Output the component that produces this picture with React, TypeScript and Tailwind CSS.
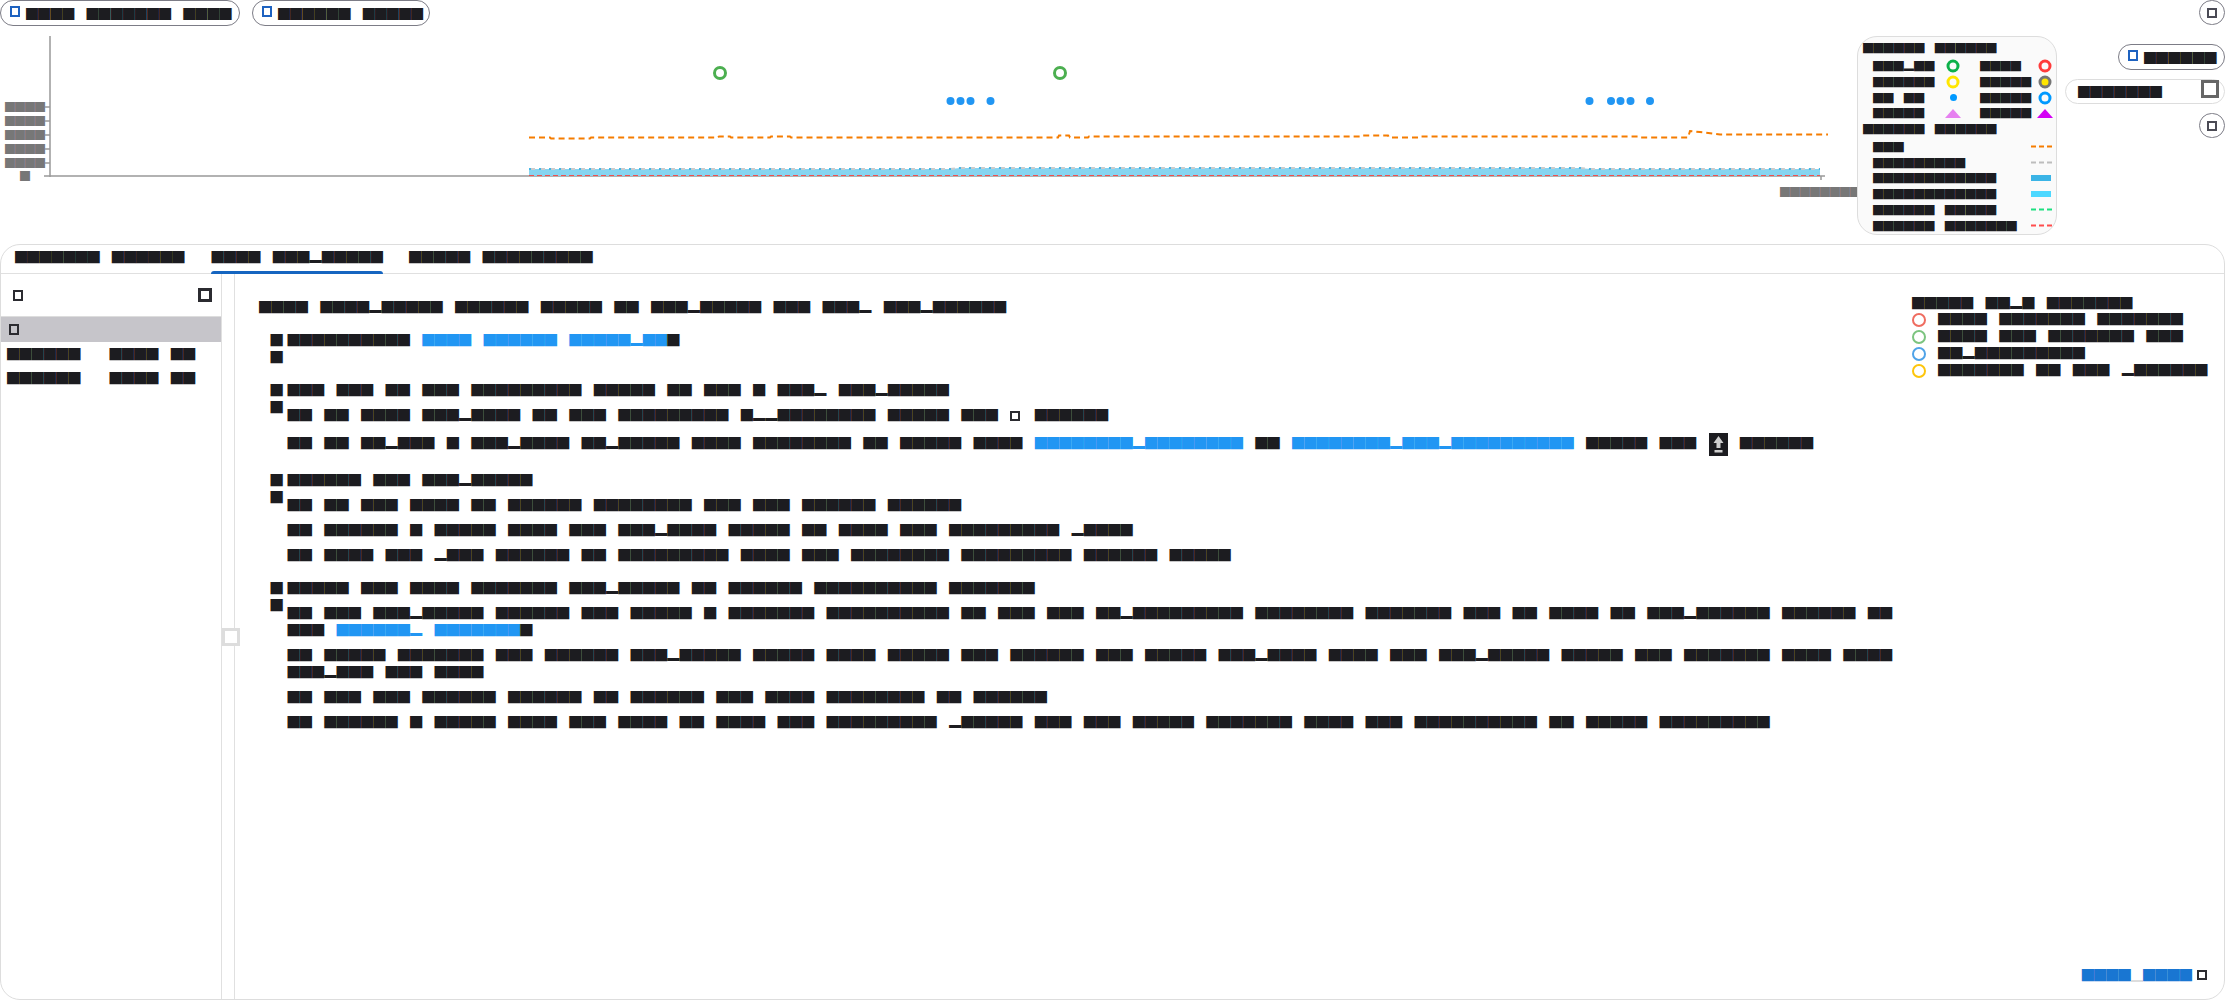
import React from "react";

const Box = ({ className = "" }: { className?: string }) => (
  <span className={`inline-block shrink-0 ${className}`} />
);

function Pill({ text, className = "" }: { text: string; className?: string }) {
  return (
    <div className={`flex h-[26px] items-center gap-[6px] rounded-full border border-[#7c7c86] pl-[9px] ${className}`}>
      <Box className="h-[11px] w-[10px] -translate-y-[2px] border-2 border-[#1e62c0]" />
      <span className="text-[12.1px]">{text}</span>
    </div>
  );
}

function RoundButton() {
  return (
    <button className="flex h-[25px] w-[26px] items-center justify-center rounded-full border border-[#7c7c86]">
      <Box className="h-[10px] w-[10px] border-2 border-[#4b4b55]" />
    </button>
  );
}

function Chart() {
  return (
    <svg width="1857" height="208" className="shrink-0" style={{ fontFamily: '"Noto Sans CJK SC", sans-serif' }}>
      <g fill="#777777" fontSize="10">
        <text x="5" y="75">████</text>
        <text x="5" y="89">████</text>
        <text x="5" y="103">████</text>
        <text x="5" y="117">████</text>
        <text x="5" y="131">████</text>
        <text x="20" y="144">█</text>
        <text x="1780" y="160">████████</text>
      </g>
      <g stroke="#999999" strokeWidth="1.5">
        <line x1="50" y1="0" x2="50" y2="141" />
        <line x1="44" y1="140" x2="1825" y2="140" />
        <line x1="45" y1="71" x2="50" y2="71" />
        <line x1="45" y1="85" x2="50" y2="85" />
        <line x1="45" y1="99" x2="50" y2="99" />
        <line x1="45" y1="113" x2="50" y2="113" />
        <line x1="45" y1="127" x2="50" y2="127" />
        <line x1="1821" y1="140" x2="1821" y2="144" />
      </g>
      <polygon points="529,133 950,133 960,132 1000,132 1010,132 1580,132 1590,133 1820,133 1820,140 529,140" fill="#87d4f0" />
      <polyline points="529,133 950,133 960,132 1000,132 1010,132 1580,132 1590,133 1820,133" fill="none" stroke="#cccccc" strokeWidth="2" strokeDasharray="6 4" />
      <polyline points="529,133 950,133 960,132 1000,132 1010,132 1580,132 1590,133 1820,133" fill="none" stroke="#45b6e6" strokeWidth="2" strokeDasharray="2 8" />
      <line x1="529" y1="139.5" x2="1820" y2="139.5" stroke="#f05050" strokeWidth="1" strokeDasharray="5 3" />
      <polyline
        points="529,101.5 550,101.5 551,102.5 590,102.5 591,101.5 718,101.5 719,100.5 730,100.5 731,101.5 770,101.5 771,100.5 790,100.5 791,101.5 1058,101.5 1059,99.5 1069,99.5 1070,101.5 1088,101.5 1089,100.5 1360,100.5 1361,99.5 1388,99.5 1389,101.5 1420,101.5 1421,100.5 1610,100.5 1640,100.5 1641,101.5 1688,101.5 1690,95 1700,96 1720,98.5 1828,98.5"
        fill="none"
        stroke="#f57c00"
        strokeWidth="2"
        strokeDasharray="6 4"
      />
      <g fill="none" stroke="#4caf50" strokeWidth="3">
        <circle cx="720" cy="37" r="5.5" />
        <circle cx="1060" cy="37" r="5.5" />
      </g>
      <g fill="#2196f3">
        <circle cx="950.5" cy="65" r="4" />
        <circle cx="960.5" cy="65" r="4" />
        <circle cx="970.5" cy="65" r="4" />
        <circle cx="990.5" cy="65" r="4" />
        <circle cx="1589.5" cy="65" r="4" />
        <circle cx="1611" cy="65" r="4" />
        <circle cx="1620.5" cy="65" r="4" />
        <circle cx="1630.5" cy="65" r="4" />
        <circle cx="1650" cy="65" r="4" />
      </g>
    </svg>
  );
}

function Ring({ color, fill = "none" }: { color: string; fill?: string }) {
  return (
    <svg width="14" height="14" viewBox="0 0 14 14" className="shrink-0">
      <circle cx="7" cy="7" r="5" fill={fill} stroke={color} strokeWidth="3" />
    </svg>
  );
}

function Triangle({ color }: { color: string }) {
  return (
    <svg width="16" height="9" viewBox="0 0 16 9" className="shrink-0">
      <polygon points="8,0 16,9 0,9" fill={color} />
    </svg>
  );
}

function Dash({ color }: { color: string }) {
  return (
    <svg width="21" height="3" viewBox="0 0 21 3">
      <line x1="0" y1="1.5" x2="21" y2="1.5" stroke={color} strokeWidth="2" strokeDasharray="5 3" />
    </svg>
  );
}

function MarkerRow({ a, sa, b, sb }: { a: string; sa: React.ReactNode; b: string; sb: React.ReactNode }) {
  return (
    <div className="grid h-[15.75px] grid-cols-[67px_26px_66px_26px] items-center pl-[10px]">
      <span>{a}</span>
      <span className="flex justify-center">{sa}</span>
      <span className="ml-[14px] whitespace-nowrap">{b}</span>
      <span className="flex justify-center">{sb}</span>
    </div>
  );
}

function LineRow({ label, swatch }: { label: string; swatch: React.ReactNode }) {
  return (
    <div className="flex h-[15.75px] items-center justify-between pl-[10px] pr-[4px]">
      <span>{label}</span>
      <span className="flex w-[21px] items-center">{swatch}</span>
    </div>
  );
}

function Legend() {
  return (
    <div className="h-[199px] w-[200px] shrink-0 rounded-[20px] border border-[#dddddd] bg-[#fafafa] pl-[5px] pt-[3px] text-[10.27px] leading-[16px]">
      <div className="h-4">██████　██████</div>
      <div className="mt-[2px]">
        <MarkerRow a="███▂██" sa={<Ring color="#0cb04a" />} b="████" sb={<Ring color="#ff3b3b" />} />
        <MarkerRow a="██████" sa={<Ring color="#ffe600" />} b="█████" sb={<Ring color="#757575" fill="#ffe600" />} />
        <MarkerRow
          a="██　██"
          sa={<span className="h-[7px] w-[7px] rounded-full bg-[#0099ff]" />}
          b="█████"
          sb={<Ring color="#0099ff" />}
        />
        <MarkerRow a="█████" sa={<Triangle color="#e680f0" />} b="█████" sb={<Triangle color="#d400f5" />} />
      </div>
      <div className="h-4">██████　██████</div>
      <div className="mt-[2px]">
        <LineRow label="███" swatch={<Dash color="#f57c00" />} />
        <LineRow label="█████████" swatch={<Dash color="#bdbdbd" />} />
        <LineRow label="████████████" swatch={<span className="h-[6px] w-5 bg-[#3bb4e6]" />} />
        <LineRow label="████████████" swatch={<span className="h-[6px] w-5 bg-[#4dd8ff]" />} />
        <LineRow label="██████　█████" swatch={<Dash color="#1de080" />} />
        <LineRow label="██████　███████" swatch={<Dash color="#ff4d4d" />} />
      </div>
    </div>
  );
}

function Link({ children }: { children: React.ReactNode }) {
  return <span className="text-[#2196f3]">{children}</span>;
}

const Tofu = () => (
  <span className="inline-block w-[12.25px] align-middle">
    <Box className="block h-[10px] w-[10px] border-2 border-[#2b2b30]" />
  </span>
);

function KeyIcon() {
  return (
    <span className="inline-flex h-[23px] w-[19px] items-center justify-center bg-[#1c1c20] align-middle">
      <svg width="11" height="17" viewBox="0 0 11 17" fill="#cfcfcf">
        <polygon points="5.5,0 10.5,7 7.5,7 7.5,12 3.5,12 3.5,7 0.5,7" />
        <rect x="1.5" y="14" width="8" height="2.5" />
      </svg>
    </span>
  );
}

function Item({ head, subs }: { head: React.ReactNode; subs?: React.ReactNode[] }) {
  return (
    <div className="ml-[11.5px] flex gap-[4.75px]">
      <span className="h-[34px] w-[12.25px] shrink-0 break-all">██</span>
      <div className="min-w-0 flex-1">
        <div>{head}</div>
        {subs?.map((s, i) => (
          <div key={i} className="mt-2">
            {s}
          </div>
        ))}
      </div>
    </div>
  );
}

function Note() {
  const rows: [string, string][] = [
    ["#ef6c60", "████　███████　███████"],
    ["#7cc47f", "████　███　███████　███"],
    ["#4fa3e8", "██▂█████████"],
    ["#fdc50c", "███████　██　███　▂██████"],
  ];
  return (
    <div className="ml-[5px] -mt-[4px] shrink-0">
      <div className="h-4">█████　██▂█　███████</div>
      {rows.map(([c, t]) => (
        <div key={t} className="flex items-center gap-[12px]">
          <svg width="14" height="14" viewBox="0 0 14 14">
            <circle cx="7" cy="7" r="6" fill="none" stroke={c} strokeWidth="2" />
          </svg>
          <span className="whitespace-nowrap">{t}</span>
        </div>
      ))}
    </div>
  );
}

function Content() {
  return (
    <div className="flex min-w-0 flex-1 pl-[24px] pt-[25px]">
      <div className="w-[1648px] shrink-0 break-keep">
        <div className="mb-4">████　████▂█████　██████　█████　██　███▂█████　███　███▂　███▂██████</div>
        <div className="flex flex-col gap-4">
          <Item
            head={
              <>
                ██████████　<Link>████　██████　█████▂██</Link>█
              </>
            }
          />
          <Item
            head="███　███　██　███　█████████　█████　██　███　█　███▂　███▂█████"
            subs={[
              <>
                ██　██　████　███▂████　██　███　█████████　█▂▂████████　█████　███　<Tofu />　██████
              </>,
              <>
                {"██　██　██▂███　█　███▂████　██▂█████　████　████████　██　█████　████　"}
                <Link>████████▂████████</Link>　██　<Link>████████▂███▂██████████</Link>　█████　███　<KeyIcon />　██████
              </>,
            ]}
          />
          <Item
            head="██████　███　███▂█████"
            subs={[
              "██　██　███　████　██　██████　████████　███　███　██████　██████",
              "██　██████　█　█████　████　███　███▂████　█████　██　████　███　█████████　▂████",
              "██　████　███　▂███　██████　██　█████████　████　███　████████　█████████　██████　█████",
            ]}
          />
          <Item
            head="█████　███　████　███████　███▂█████　██　██████　██████████　███████"
            subs={[
              <>
                {"██　███　███▂█████　██████　███　█████　█　███████　██████████　██　███　███　██▂█████████　████████　███████　███　██　████　██　███▂██████　██████　██　███　"}
                <Link>██████▂　███████</Link>█
              </>,
              "██　█████　███████　███　██████　███▂█████　█████　████　█████　███　██████　███　█████　███▂████　████　███　███▂█████　█████　███　███████　████　████　███▂███　███　████",
              "██　███　███　██████　██████　██　██████　███　████　████████　██　██████",
              "██　██████　█　█████　████　███　████　██　████　███　█████████　▂█████　███　███　█████　███████　████　███　██████████　██　█████　█████████",
            ]}
          />
        </div>
      </div>
      <Note />
    </div>
  );
}

export default function App() {
  return (
    <div className='flex h-[1000px] w-[2225px] flex-col bg-white font-["Noto_Sans_CJK_SC",sans-serif] text-[12.25px] leading-[17px] text-[#1c1c20]'>
      <div className="flex items-start justify-between">
        <div className="flex gap-3">
          <Pill text="████　███████　████" className="w-[240px]" />
          <Pill text="██████　█████" className="w-[178px]" />
        </div>
        <RoundButton />
      </div>
      <div className="mt-[10px] flex h-[208px]">
        <Chart />
        <Legend />
        <div className="ml-2 flex flex-1 flex-col items-end pt-2">
          <Pill text="██████" className="w-[107px]" />
          <div className="mt-[9px] flex h-[25px] w-[160px] items-center justify-between rounded-full border border-[#dddddd] pl-[12px] pr-[5px]">
            <span className="text-[12px]">███████</span>
            <Box className="-translate-y-[3px] h-[18px] w-[18px] border-[3px] border-[#666666]" />
          </div>
          <div className="mt-[9px]">
            <RoundButton />
          </div>
        </div>
      </div>
      <div className="flex min-h-0 flex-1 flex-col rounded-[20px] border border-[#dddddd]">
        <div className="flex h-[29px] shrink-0 border-b border-[#e0e0e0]">
          <div className="pl-[14px] pr-[14px] pt-[4px] tracking-[-0.15px]">███████　██████</div>
          <div className="relative px-[13px] pt-[4px]">
            ████　███▂█████
            <span className="absolute bottom-[-1px] left-[13px] right-[13px] h-[3px] rounded-t-[3px] bg-[#1565c0]" />
          </div>
          <div className="px-[13px] pt-[4px]">█████　█████████</div>
        </div>
        <div className="flex min-h-0 flex-1">
          <div className="w-[221px] shrink-0 border-r border-[#e0e0e0]">
            <div className="flex h-[43px] items-center justify-between border-b border-[#dddddd] pl-[12px] pr-[9px]">
              <Box className="h-[11px] w-[10px] border-2 border-[#2b2b30]" />
              <Box className="h-[14px] w-[14px] border-[3px] border-[#2b2b30]" />
            </div>
            <div className="flex h-[25px] items-center bg-[#c6c5ca] pl-[8px]">
              <Box className="h-[11px] w-[10px] border-2 border-[#2b2b30]" />
            </div>
            <div className="mt-[4px] flex flex-col gap-[7px] pl-[6px]">
              <div className="flex">
                <span>██████</span>
                <span className="ml-[29px]">████　██</span>
              </div>
              <div className="flex">
                <span>██████</span>
                <span className="ml-[29px]">████　██</span>
              </div>
            </div>
          </div>
          <div className="relative w-[13px] shrink-0 border-r border-[#e0e0e0]">
            <Box className="absolute left-0 top-[354px] z-10 h-[18px] w-[18px] border-[3px] border-[#dddddd] bg-white" />
          </div>
          <div className="relative min-w-0 flex-1">
            <Content />
            <div className="absolute bottom-[15px] right-[17px] flex items-center">
              <span className="text-[#1976d2]">████</span>
              <span className="h-3 w-[12.25px] border-b-2 border-[#dddddd]" />
              <span className="text-[#1976d2]">████</span>
              <Box className="ml-[5px] h-[10px] w-[10px] -translate-y-[1px] border-2 border-[#2b2b30]" />
            </div>
          </div>
        </div>
      </div>
    </div>
  );
}
